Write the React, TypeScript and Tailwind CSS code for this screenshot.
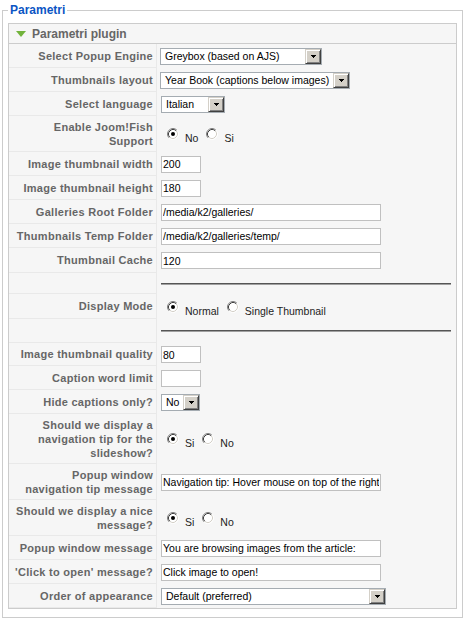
import type { ReactNode } from 'react';

const LABEL_CLS =
  'flex w-[148px] shrink-0 items-center justify-end border-r border-b border-[#e9e9e9] pr-[3px] text-right text-[11px] leading-[14px] font-bold tracking-[0.28px] text-[#666]';

function Radio({ checked }: { checked?: boolean }) {
  return (
    <svg width="12" height="12" viewBox="0 0 12 12" className="shrink-0">
      <circle cx="6" cy="6" r="5" fill="#fff" />
      <path d="M2.11 9.89 A5.5 5.5 0 0 1 9.89 2.11" stroke="#808080" fill="none" />
      <path d="M9.89 2.11 A5.5 5.5 0 0 1 2.11 9.89" stroke="#ffffff" fill="none" />
      <path d="M2.82 9.18 A4.5 4.5 0 0 1 9.18 2.82" stroke="#404040" fill="none" />
      <path d="M9.18 2.82 A4.5 4.5 0 0 1 2.82 9.18" stroke="#d4d0c8" fill="none" />
      {checked && <circle cx="6" cy="6" r="2" fill="#000" />}
    </svg>
  );
}

function RadioGroup({ options, checked }: { options: string[]; checked: number }) {
  return (
    <div className="flex items-center">
      {options.map((o, i) => (
        <div key={o} className={`flex items-center ${i === 0 ? 'ml-[7px]' : 'ml-[8px]'}`}>
          <Radio checked={i === checked} />
          <span className="ml-[6px] mt-[8px] text-[10.5px] leading-[12px] whitespace-nowrap text-[#222]">{o}</span>
        </div>
      ))}
    </div>
  );
}

function FakeSelect({ value, w }: { value: string; w: string }) {
  return (
    <div className={`${w} flex h-[17px] items-stretch border border-[#a5acb2] bg-white`}>
      <span className="flex-1 overflow-hidden pl-[4px] text-[10.5px] leading-[15px] whitespace-nowrap text-black">{value}</span>
      <span className="flex w-[16px] shrink-0 items-center justify-center border border-t-[#d4d0c8] border-l-[#d4d0c8] border-r-[#404040] border-b-[#404040] bg-[#d4d0c8] shadow-[inset_1px_1px_0_#fff,inset_-1px_-1px_0_#808080]">
        <svg width="5" height="3" viewBox="0 0 5 3">
          <path d="M0 0h5v1H0z M1 1h3v1H1z M2 2h1v1H2z" fill="#000" />
        </svg>
      </span>
    </div>
  );
}

function TextInput({ value, w }: { value: string; w: string }) {
  return (
    <input
      readOnly
      defaultValue={value}
      className={`${w} ml-[1px] h-[17px] border border-[#c0c0c0] bg-white px-[1px] text-[10.5px] text-black outline-none`}
    />
  );
}

function Rule() {
  return <div className="ml-[1px] mr-[5px] h-[2px] flex-1 border-t border-b border-t-[#555] border-b-[#a0a0a0]" />;
}

function Row({ label, h = 'h-[24px]', children }: { label?: ReactNode; h?: string; children: ReactNode }) {
  return (
    <div className={`flex ${h}`}>
      <div className={LABEL_CLS}>
        <span>{label}</span>
      </div>
      <div className="flex min-w-0 flex-1 items-center pl-[3px]">{children}</div>
    </div>
  );
}

export default function App() {
  return (
    <div className="min-h-[623px] bg-white pt-[3px] font-['Liberation_Sans',Arial,sans-serif]">
      <fieldset className="ml-[2px] w-[461px] border border-[#ccc] px-[5px] pt-[6px] pb-[8px]">
        <legend className="px-[2px] text-[12px] leading-[14px] font-bold text-[#0B55C4]">Parametri</legend>

        <div className="border border-[#ccc] bg-[#f6f6f6]">
          <div className="flex h-[20px] items-center border-b border-[#ccc] bg-[#f6f6f6] pl-[7px]">
            <svg width="10" height="6" viewBox="0 0 10 6">
              <polygon points="0,0 10,0 5,6" fill="#72b33c" />
            </svg>
            <span className="ml-[6px] text-[12px] leading-[14px] font-bold text-[#666]">Parametri plugin</span>
          </div>

          <Row label="Select Popup Engine">
            <FakeSelect value="Greybox (based on AJS)" w="w-[162px]" />
          </Row>
          <Row label="Thumbnails layout">
            <FakeSelect value="Year Book (captions below images)" w="w-[190px]" />
          </Row>
          <Row label="Select language">
            <div className="ml-[1px]">
              <FakeSelect value="Italian" w="w-[64px]" />
            </div>
          </Row>
          <Row label={<>Enable Joom!Fish<br />Support</>} h="h-[36px]">
            <RadioGroup options={['No', 'Si']} checked={0} />
          </Row>
          <Row label="Image thumbnail width">
            <TextInput value="200" w="w-[40px]" />
          </Row>
          <Row label="Image thumbnail height">
            <TextInput value="180" w="w-[40px]" />
          </Row>
          <Row label="Galleries Root Folder">
            <TextInput value="/media/k2/galleries/" w="w-[220px]" />
          </Row>
          <Row label="Thumbnails Temp Folder">
            <TextInput value="/media/k2/galleries/temp/" w="w-[220px]" />
          </Row>
          <Row label="Thumbnail Cache" h="h-[25px]">
            <TextInput value="120" w="w-[220px]" />
          </Row>
          <Row h="h-[21px]">
            <Rule />
          </Row>
          <Row label="Display Mode" h="h-[25px]">
            <RadioGroup options={['Normal', 'Single Thumbnail']} checked={0} />
          </Row>
          <Row h="h-[24px]">
            <Rule />
          </Row>
          <Row label="Image thumbnail quality" h="h-[23px]">
            <TextInput value="80" w="w-[40px]" />
          </Row>
          <Row label="Caption word limit">
            <TextInput value="" w="w-[40px]" />
          </Row>
          <Row label="Hide captions only?">
            <div className="ml-[1px]">
              <FakeSelect value="No" w="w-[39px]" />
            </div>
          </Row>
          <Row label={<>Should we display a<br />navigation tip for the<br />slideshow?</>} h="h-[50px]">
            <RadioGroup options={['Si', 'No']} checked={0} />
          </Row>
          <Row label={<>Popup window<br />navigation tip message</>} h="h-[36px]">
            <TextInput value="Navigation tip: Hover mouse on top of the right side of the image to see the next image" w="w-[220px]" />
          </Row>
          <Row label={<>Should we display a nice<br />message?</>} h="h-[36px]">
            <RadioGroup options={['Si', 'No']} checked={0} />
          </Row>
          <Row label="Popup window message">
            <TextInput value="You are browsing images from the article:" w="w-[220px]" />
          </Row>
          <Row label="'Click to open' message?">
            <TextInput value="Click image to open!" w="w-[220px]" />
          </Row>
          <Row label="Order of appearance">
            <div className="ml-[1px]">
              <FakeSelect value="Default (preferred)" w="w-[225px]" />
            </div>
          </Row>
        </div>
      </fieldset>
    </div>
  );
}
